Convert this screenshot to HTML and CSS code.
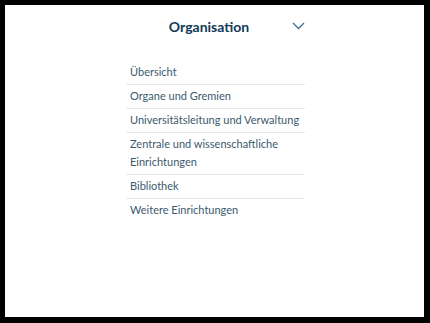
FILE: index.html
```html
<!DOCTYPE html>
<html lang="de">
<head>
    <meta charset="UTF-8">
    <meta name="viewport" content="width=device-width, initial-scale=1.0">
    <title>Organisation</title>
    <link rel="stylesheet" href="styles.css">
</head>
<body>
    <div class="frame">
        <nav class="menu">
            <div class="menu-head">
                <h2 class="menu-title">Organisation</h2>
                <svg class="chevron" width="13" height="8" viewBox="0 0 13 8">
                    <path d="M1 1 L6.5 6.5 L12 1" fill="none" stroke="#3f6f95" stroke-width="1.3"/>
                </svg>
            </div>

            <!-- Unterpunkte -->
            <ul class="menu-list">
                <li><a href="#">Übersicht</a></li>
                <li><a href="#">Organe und Gremien</a></li>
                <li><a href="#">Universitätsleitung und Verwaltung</a></li>
                <li><a href="#">Zentrale und wissenschaftliche Einrichtungen</a></li>
                <li><a href="#">Bibliothek</a></li>
                <li><a href="#">Weitere Einrichtungen</a></li>
            </ul>
        </nav>
    </div>
</body>
</html>
```

FILE: styles.css
```css
body {
    margin: 0;
    background-color: #000;
    font-family: Lato, "Noto Sans", sans-serif;
}

.frame {
    background-color: #fff;
    margin: 5px 6px 6px 5px;
    height: 312px;
    display: flex;
    justify-content: center;
}

.menu {
    width: 179px;
    margin-left: 2px;
}

.menu-head {
    display: flex;
    align-items: center;
    height: 43px;
}

.menu-title {
    flex: 1;
    margin: 0;
    text-align: center;
    font-size: 14px;
    font-weight: 700;
    color: #0f3a57;
}

.chevron {
    display: block;
    margin-top: -1px;
}

.menu-list {
    list-style-type: none;
    margin: 13px 0 0;
    padding: 0;
}

.menu-list li {
    border-bottom: 1px solid #e2e8ed;
    padding: 2px 0 3px 4px;
    font-size: 11px;
    line-height: 18px;
}

.menu-list li:last-child {
    border-bottom: none;
}

.menu-list a {
    color: #3b5a6e;
    text-decoration: none;
}
```
